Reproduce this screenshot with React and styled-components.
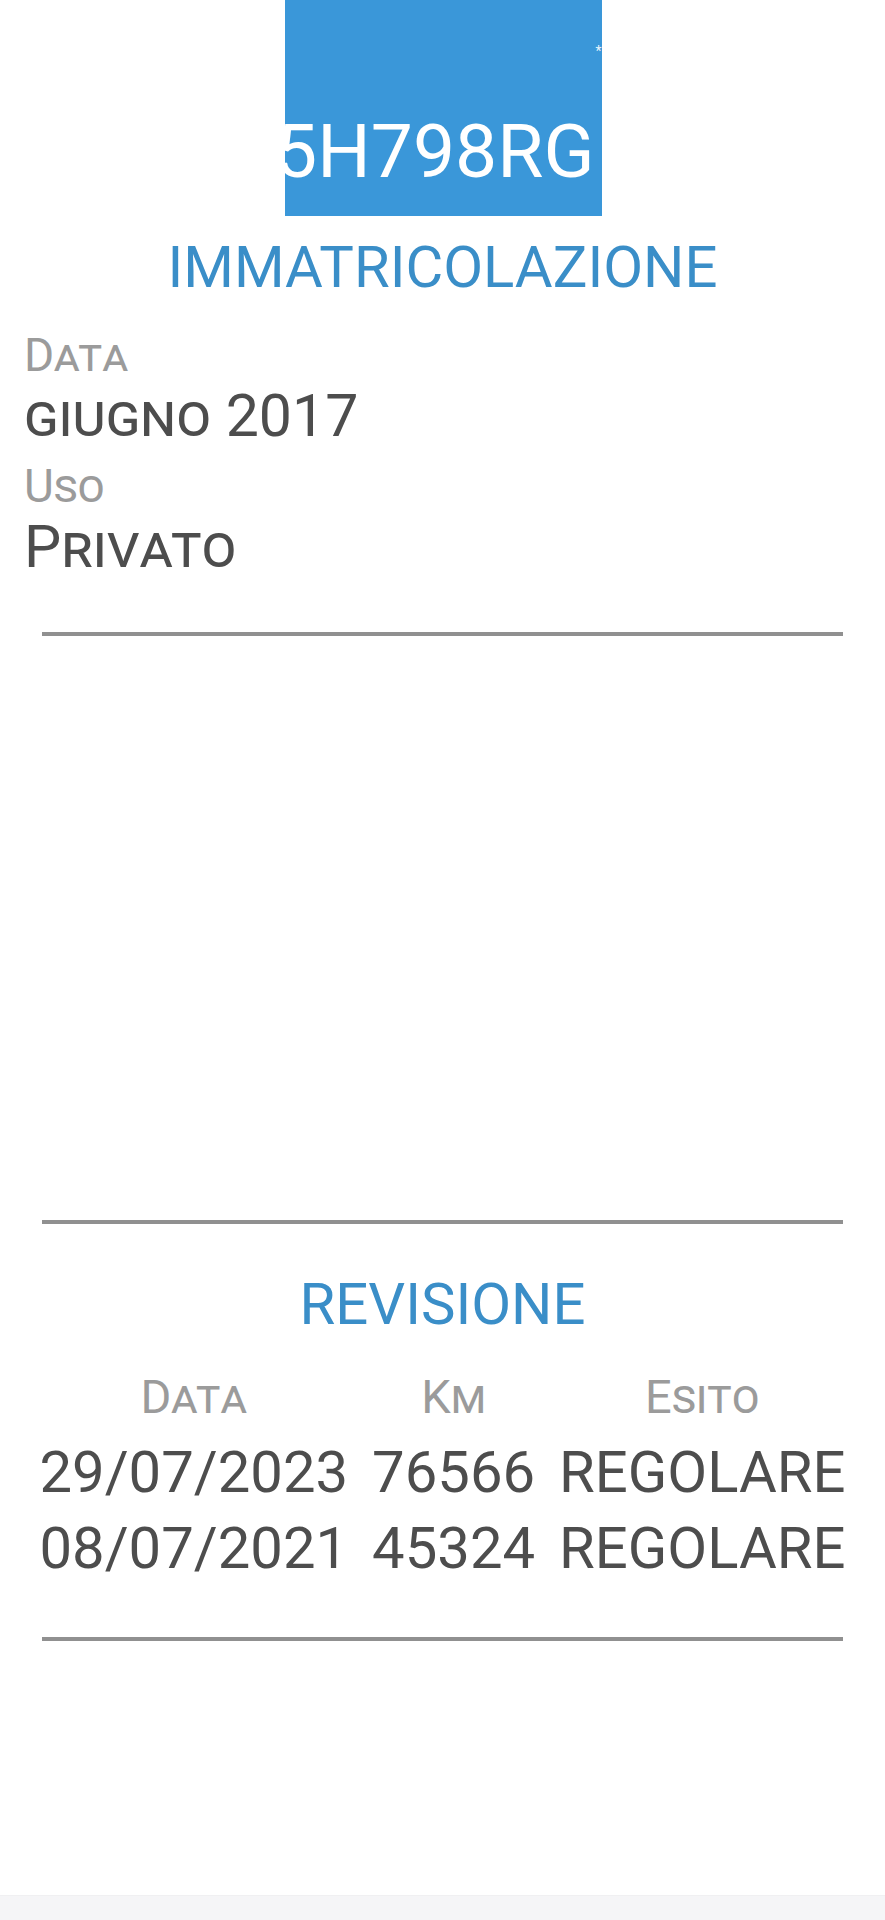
import React from "react";
import styled, { createGlobalStyle } from "styled-components";

const GlobalStyle = createGlobalStyle`
  html, body {
    margin: 0;
    padding: 0;
    background: #ffffff;
  }
  body {
    font-family: Roboto, "Liberation Sans", sans-serif;
  }
`;

const Page = styled.div`
  min-height: 1920px;
  display: flex;
  flex-direction: column;
  background: #ffffff;
  font-family: Roboto, "Liberation Sans", sans-serif;
`;

const PlateWrap = styled.div`
  display: flex;
  justify-content: center;
`;

const Plate = styled.div`
  position: relative;
  width: 317px;
  height: 216px;
  margin-left: 1px;
  background: #3a97d9;
  overflow: hidden;
  display: flex;
  align-items: flex-end;
  justify-content: flex-end;
  padding: 0 7px 28px 0;
  box-sizing: border-box;
`;

const PlateText = styled.div`
  position: relative;
  color: #ffffff;
  font-size: 75px;
  line-height: 74px;
  white-space: nowrap;
`;

const Ghost = styled.span`
  position: absolute;
  left: -7px;
  bottom: 0;
  color: #ffffff;
  clip-path: inset(45% 60% 0 0);
`;

const Spark = styled.span`
  position: absolute;
  right: 0px;
  top: 44px;
  color: #e8f4fc;
  font-size: 14px;
  line-height: 14px;
`;

const Heading = styled.h2`
  margin: ${(p) => p.$mt}px 0 0;
  text-align: center;
  color: #3a8ec8;
  font-weight: 400;
  font-size: 58px;
  line-height: 68px;
`;

const Fields = styled.div`
  display: flex;
  flex-direction: column;
  gap: 9px;
  padding: 26px 24px 0;
`;

const Field = styled.div`
  display: flex;
  flex-direction: column;
`;

const Label = styled.div`
  color: #9b9b9b;
  font-size: 46px;
  line-height: 56px;
  font-variant: small-caps;
`;

const Value = styled.div`
  color: #4d4d4d;
  font-size: 59px;
  line-height: 66px;
  font-variant: small-caps;
`;

const Divider = styled.hr`
  border: 0;
  height: 4px;
  background: #909090;
  margin: ${(p) => p.$mt}px 42px 0;
`;

const Table = styled.div`
  display: grid;
  grid-template-columns: auto auto auto;
  column-gap: 24px;
  justify-content: center;
  justify-items: center;
  margin-top: 22px;
`;

const HeadCell = styled.div`
  color: #9b9b9b;
  font-size: 47px;
  line-height: 74px;
  font-variant: small-caps;
`;

const Cell = styled.div`
  color: #4d4d4d;
  font-size: 58px;
  line-height: 76px;
  white-space: nowrap;
`;

const Grow = styled.div`
  flex: 1;
`;

const BottomBar = styled.div`
  height: 24px;
  background: #f5f5f7;
  border-top: 1px solid #f0f0f2;
`;

const rows = [
  ["29/07/2023", "76566", "REGOLARE"],
  ["08/07/2021", "45324", "REGOLARE"],
];

export default function App() {
  return (
    <>
      <GlobalStyle />
      <Page>
        <PlateWrap>
          <Plate>
            <Spark>*</Spark>
            <PlateText>
              <Ghost aria-hidden="true">6</Ghost>5H798RG
            </PlateText>
          </Plate>
        </PlateWrap>
        <Heading $mt={17}>IMMATRICOLAZIONE</Heading>
        <Fields>
          <Field>
            <Label>Data</Label>
            <Value>giugno 2017</Value>
          </Field>
          <Field>
            <Label>Uso</Label>
            <Value>Privato</Value>
          </Field>
        </Fields>
        <Divider $mt={52} />
        <Divider $mt={584} />
        <Heading $mt={46}>REVISIONE</Heading>
        <Table>
          <HeadCell>Data</HeadCell>
          <HeadCell>Km</HeadCell>
          <HeadCell>Esito</HeadCell>
          {rows.map((r) =>
            r.map((c, i) => <Cell key={r[0] + i}>{c}</Cell>)
          )}
        </Table>
        <Divider $mt={51} />
        <Grow />
        <BottomBar />
      </Page>
    </>
  );
}
